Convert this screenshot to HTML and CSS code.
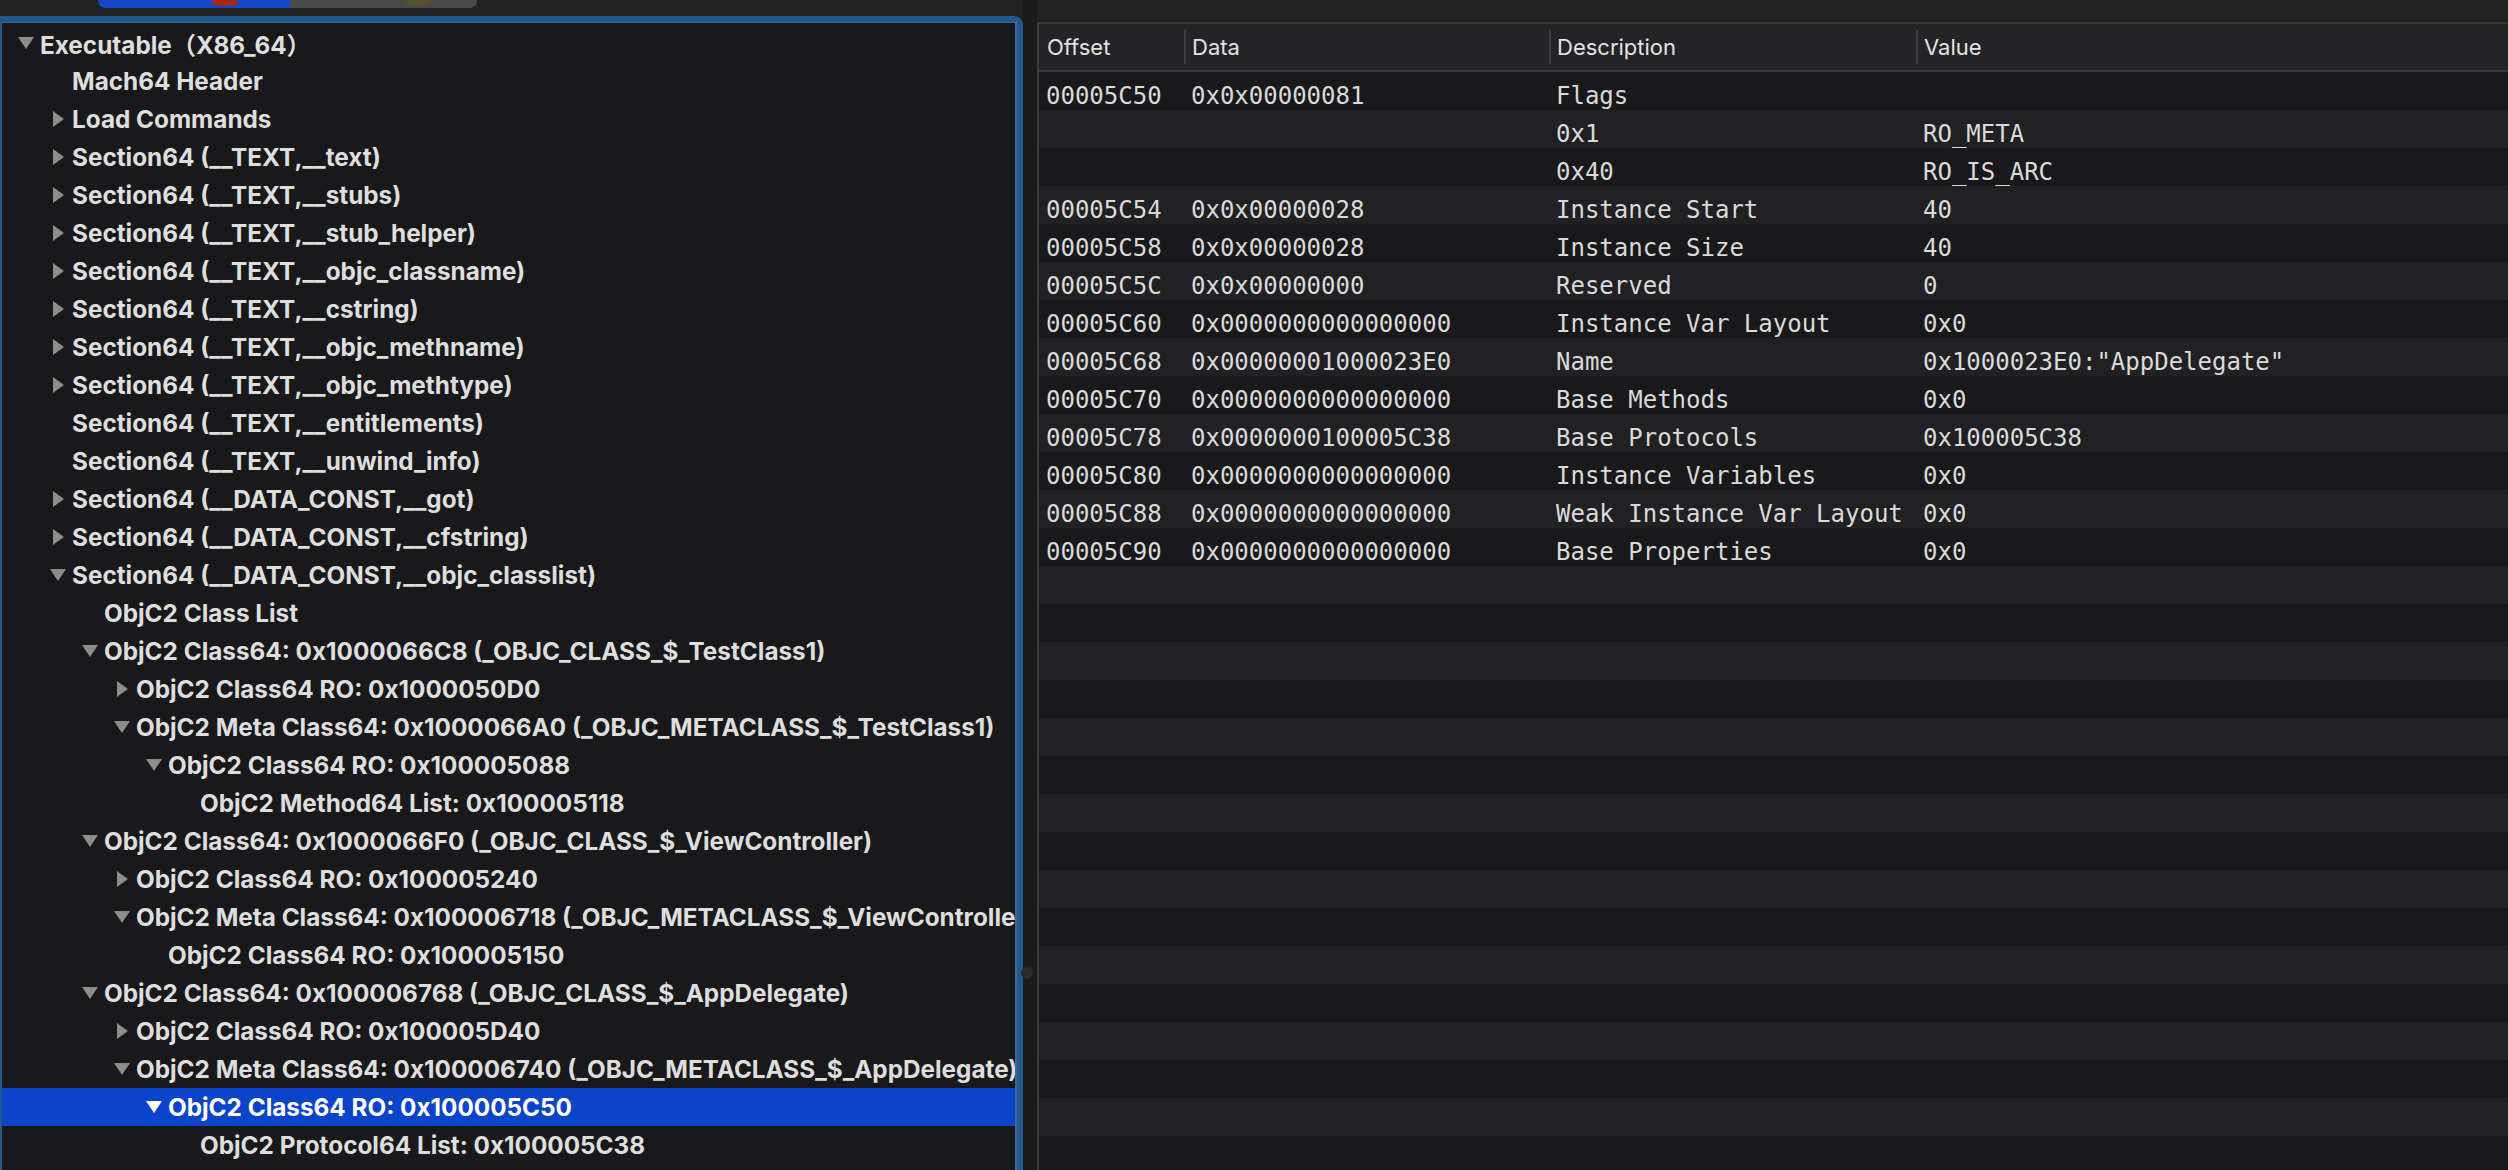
FILE: index.html
```html
<!DOCTYPE html>
<html>
<head>
<meta charset="utf-8">
<title>MachOView</title>
<link rel="stylesheet" href="styles.css">
</head>
<body>
<div class="leftcol">
  <div class="topbar">
    <div class="seg">
      <div class="seg-on"><span class="blob blob-red"></span></div>
      <div class="seg-off"><span class="blob blob-olive"></span></div>
    </div>
  </div>
  <div class="ring">
    <div class="outline">
      <div class="row l0"><span class="tw"><svg class="down" width="16" height="12" viewBox="0 0 16 12"><path d="M0 0H16L8 12Z"/></svg></span><span class="label">Executable（X86_64）</span></div>
      <div class="row l1"><span class="tw"></span><span class="label">Mach64 Header</span></div>
      <div class="row l1"><span class="tw"><svg width="11" height="16" viewBox="0 0 11 16"><path d="M0 0L11 8L0 16Z"/></svg></span><span class="label">Load Commands</span></div>
      <div class="row l1"><span class="tw"><svg width="11" height="16" viewBox="0 0 11 16"><path d="M0 0L11 8L0 16Z"/></svg></span><span class="label">Section64 (__TEXT,__text)</span></div>
      <div class="row l1"><span class="tw"><svg width="11" height="16" viewBox="0 0 11 16"><path d="M0 0L11 8L0 16Z"/></svg></span><span class="label">Section64 (__TEXT,__stubs)</span></div>
      <div class="row l1"><span class="tw"><svg width="11" height="16" viewBox="0 0 11 16"><path d="M0 0L11 8L0 16Z"/></svg></span><span class="label">Section64 (__TEXT,__stub_helper)</span></div>
      <div class="row l1"><span class="tw"><svg width="11" height="16" viewBox="0 0 11 16"><path d="M0 0L11 8L0 16Z"/></svg></span><span class="label">Section64 (__TEXT,__objc_classname)</span></div>
      <div class="row l1"><span class="tw"><svg width="11" height="16" viewBox="0 0 11 16"><path d="M0 0L11 8L0 16Z"/></svg></span><span class="label">Section64 (__TEXT,__cstring)</span></div>
      <div class="row l1"><span class="tw"><svg width="11" height="16" viewBox="0 0 11 16"><path d="M0 0L11 8L0 16Z"/></svg></span><span class="label">Section64 (__TEXT,__objc_methname)</span></div>
      <div class="row l1"><span class="tw"><svg width="11" height="16" viewBox="0 0 11 16"><path d="M0 0L11 8L0 16Z"/></svg></span><span class="label">Section64 (__TEXT,__objc_methtype)</span></div>
      <div class="row l1"><span class="tw"></span><span class="label">Section64 (__TEXT,__entitlements)</span></div>
      <div class="row l1"><span class="tw"></span><span class="label">Section64 (__TEXT,__unwind_info)</span></div>
      <div class="row l1"><span class="tw"><svg width="11" height="16" viewBox="0 0 11 16"><path d="M0 0L11 8L0 16Z"/></svg></span><span class="label">Section64 (__DATA_CONST,__got)</span></div>
      <div class="row l1"><span class="tw"><svg width="11" height="16" viewBox="0 0 11 16"><path d="M0 0L11 8L0 16Z"/></svg></span><span class="label">Section64 (__DATA_CONST,__cfstring)</span></div>
      <div class="row l1"><span class="tw"><svg width="16" height="12" viewBox="0 0 16 12"><path d="M0 0H16L8 12Z"/></svg></span><span class="label">Section64 (__DATA_CONST,__objc_classlist)</span></div>
      <div class="row l2"><span class="tw"></span><span class="label">ObjC2 Class List</span></div>
      <div class="row l2"><span class="tw"><svg width="16" height="12" viewBox="0 0 16 12"><path d="M0 0H16L8 12Z"/></svg></span><span class="label">ObjC2 Class64: 0x1000066C8 (_OBJC_CLASS_$_TestClass1)</span></div>
      <div class="row l3"><span class="tw"><svg width="11" height="16" viewBox="0 0 11 16"><path d="M0 0L11 8L0 16Z"/></svg></span><span class="label">ObjC2 Class64 RO: 0x1000050D0</span></div>
      <div class="row l3"><span class="tw"><svg width="16" height="12" viewBox="0 0 16 12"><path d="M0 0H16L8 12Z"/></svg></span><span class="label">ObjC2 Meta Class64: 0x1000066A0 (_OBJC_METACLASS_$_TestClass1)</span></div>
      <div class="row l4"><span class="tw"><svg width="16" height="12" viewBox="0 0 16 12"><path d="M0 0H16L8 12Z"/></svg></span><span class="label">ObjC2 Class64 RO: 0x100005088</span></div>
      <div class="row l5"><span class="tw"></span><span class="label">ObjC2 Method64 List: 0x100005118</span></div>
      <div class="row l2"><span class="tw"><svg width="16" height="12" viewBox="0 0 16 12"><path d="M0 0H16L8 12Z"/></svg></span><span class="label">ObjC2 Class64: 0x1000066F0 (_OBJC_CLASS_$_ViewController)</span></div>
      <div class="row l3"><span class="tw"><svg width="11" height="16" viewBox="0 0 11 16"><path d="M0 0L11 8L0 16Z"/></svg></span><span class="label">ObjC2 Class64 RO: 0x100005240</span></div>
      <div class="row l3"><span class="tw"><svg width="16" height="12" viewBox="0 0 16 12"><path d="M0 0H16L8 12Z"/></svg></span><span class="label">ObjC2 Meta Class64: 0x100006718 (_OBJC_METACLASS_$_ViewController)</span></div>
      <div class="row l4"><span class="tw"></span><span class="label">ObjC2 Class64 RO: 0x100005150</span></div>
      <div class="row l2"><span class="tw"><svg width="16" height="12" viewBox="0 0 16 12"><path d="M0 0H16L8 12Z"/></svg></span><span class="label">ObjC2 Class64: 0x100006768 (_OBJC_CLASS_$_AppDelegate)</span></div>
      <div class="row l3"><span class="tw"><svg width="11" height="16" viewBox="0 0 11 16"><path d="M0 0L11 8L0 16Z"/></svg></span><span class="label">ObjC2 Class64 RO: 0x100005D40</span></div>
      <div class="row l3"><span class="tw"><svg width="16" height="12" viewBox="0 0 16 12"><path d="M0 0H16L8 12Z"/></svg></span><span class="label">ObjC2 Meta Class64: 0x100006740 (_OBJC_METACLASS_$_AppDelegate)</span></div>
      <div class="row l4 sel"><span class="tw"><svg width="16" height="12" viewBox="0 0 16 12"><path d="M0 0H16L8 12Z"/></svg></span><span class="label">ObjC2 Class64 RO: 0x100005C50</span></div>
      <div class="row l5"><span class="tw"></span><span class="label">ObjC2 Protocol64 List: 0x100005C38</span></div>
    </div>
  </div>
</div>
<div class="gap"></div>
<div class="rightcol">
  <div class="table">
    <div class="thead">
      <div class="th">Offset</div>
      <div class="th">Data</div>
      <div class="th">Description</div>
      <div class="th">Value</div>
    </div>
    <div class="tbody">
      <div class="tr"><div class="td">00005C50</div><div class="td">0x0x00000081</div><div class="td">Flags</div><div class="td"></div></div>
      <div class="tr"><div class="td"></div><div class="td"></div><div class="td">0x1</div><div class="td">RO_META</div></div>
      <div class="tr"><div class="td"></div><div class="td"></div><div class="td">0x40</div><div class="td">RO_IS_ARC</div></div>
      <div class="tr"><div class="td">00005C54</div><div class="td">0x0x00000028</div><div class="td">Instance Start</div><div class="td">40</div></div>
      <div class="tr"><div class="td">00005C58</div><div class="td">0x0x00000028</div><div class="td">Instance Size</div><div class="td">40</div></div>
      <div class="tr"><div class="td">00005C5C</div><div class="td">0x0x00000000</div><div class="td">Reserved</div><div class="td">0</div></div>
      <div class="tr"><div class="td">00005C60</div><div class="td">0x0000000000000000</div><div class="td">Instance Var Layout</div><div class="td">0x0</div></div>
      <div class="tr"><div class="td">00005C68</div><div class="td">0x00000001000023E0</div><div class="td">Name</div><div class="td">0x1000023E0:"AppDelegate"</div></div>
      <div class="tr"><div class="td">00005C70</div><div class="td">0x0000000000000000</div><div class="td">Base Methods</div><div class="td">0x0</div></div>
      <div class="tr"><div class="td">00005C78</div><div class="td">0x0000000100005C38</div><div class="td">Base Protocols</div><div class="td">0x100005C38</div></div>
      <div class="tr"><div class="td">00005C80</div><div class="td">0x0000000000000000</div><div class="td">Instance Variables</div><div class="td">0x0</div></div>
      <div class="tr"><div class="td">00005C88</div><div class="td">0x0000000000000000</div><div class="td">Weak Instance Var Layout</div><div class="td">0x0</div></div>
      <div class="tr"><div class="td">00005C90</div><div class="td">0x0000000000000000</div><div class="td">Base Properties</div><div class="td">0x0</div></div>
      <div class="tr"></div><div class="tr"></div><div class="tr"></div><div class="tr"></div>
      <div class="tr"></div><div class="tr"></div><div class="tr"></div><div class="tr"></div>
      <div class="tr"></div><div class="tr"></div><div class="tr"></div><div class="tr"></div>
      <div class="tr"></div><div class="tr"></div><div class="tr"></div><div class="tr"></div>
    </div>
  </div>
</div>
<div class="handle"></div>
</body>
</html>
```

FILE: styles.css
```css
* { box-sizing: border-box; }
html, body { margin: 0; padding: 0; }
body {
  width: 2508px;
  height: 1170px;
  overflow: hidden;
  background: #212121;
  display: flex;
  position: relative;
  font-family: Inter, "Noto Sans CJK SC", sans-serif;
}

/* left column */
.leftcol { width: 1023px; flex: none; display: flex; flex-direction: column; }
.topbar { height: 16px; padding-left: 98px; flex: none; }
.seg { display: flex; width: 379px; height: 8px; border-radius: 0 0 7px 7px; overflow: hidden; }
.seg-on { width: 192px; background: #1746c6; padding-left: 114px; }
.seg-off { flex: 1; background: #4a4a4a; padding-left: 115px; }
.blob { display: block; width: 26px; height: 6px; border-radius: 0 0 11px 11px; }
.blob-red { background: #a32a15; }
.blob-olive { background: #55512f; }

.ring {
  flex: 1;
  min-height: 0;
  display: flex;
  background: #23598b;
  border-top-right-radius: 9px;
  padding: 6px 6px 0 2px;
}
.outline {
  flex: 1;
  min-width: 0;
  background: #19191b;
  border-top: 1px solid #3c6b99;
  border-right: 2px solid #3c6b99;
  overflow: hidden;
  padding-top: 1px;
}
.row {
  height: 38px;
  display: flex;
  align-items: center;
  white-space: nowrap;
  font-size: 24.3px;
  font-weight: 700;
  color: #dedede;
}
.tw {
  width: 20px;
  flex: none;
  margin-right: 4px;
  display: flex;
  justify-content: center;
  align-items: center;
  color: #8c8c8c;
}
.tw svg { display: block; fill: currentColor; }
.sel { background: #0b43c9; color: #ffffff; }
.sel .tw { color: #ffffff; }
.l0 { padding-left: 14px; }
.l1 { padding-left: 46px; }
.l2 { padding-left: 78px; }
.l3 { padding-left: 110px; }
.l4 { padding-left: 142px; }
.l5 { padding-left: 174px; }

/* splitter */
.gap { width: 14px; flex: none; background: #1b1b1b; }
.handle {
  position: absolute;
  left: 1021px;
  top: 967px;
  width: 12px;
  height: 12px;
  border-radius: 50%;
  background: #2c2c2c;
}

/* right column */
.rightcol { flex: 1; min-width: 0; display: flex; flex-direction: column; padding-top: 22px; }
.table { flex: 1; min-height: 0; overflow: hidden; background: #19191b; border-left: 2px solid #3c3c3e; }
.thead {
  display: grid;
  grid-template-columns: 145px 365px 367px 1fr;
  height: 50px;
  background: #242428;
  border-top: 2px solid #38383b;
  border-bottom: 2px solid #38383b;
}
.th {
  display: flex;
  align-items: center;
  padding-left: 8px;
  font-size: 22px;
  color: #e2e2e2;
}
.th + .th { background: linear-gradient(#3d3d40, #3d3d40) 0 50% / 2px 34px no-repeat; }

.tr {
  display: grid;
  grid-template-columns: 145px 365px 367px 1fr;
  height: 38px;
  background: #19191b;
}
.tr:nth-child(even) { background: #212124; }
.td {
  padding: 10px 0 0 7px;
  line-height: 28px;
  font-family: "DejaVu Sans Mono", monospace;
  font-size: 24px;
  color: #dadada;
  white-space: nowrap;
}
```
